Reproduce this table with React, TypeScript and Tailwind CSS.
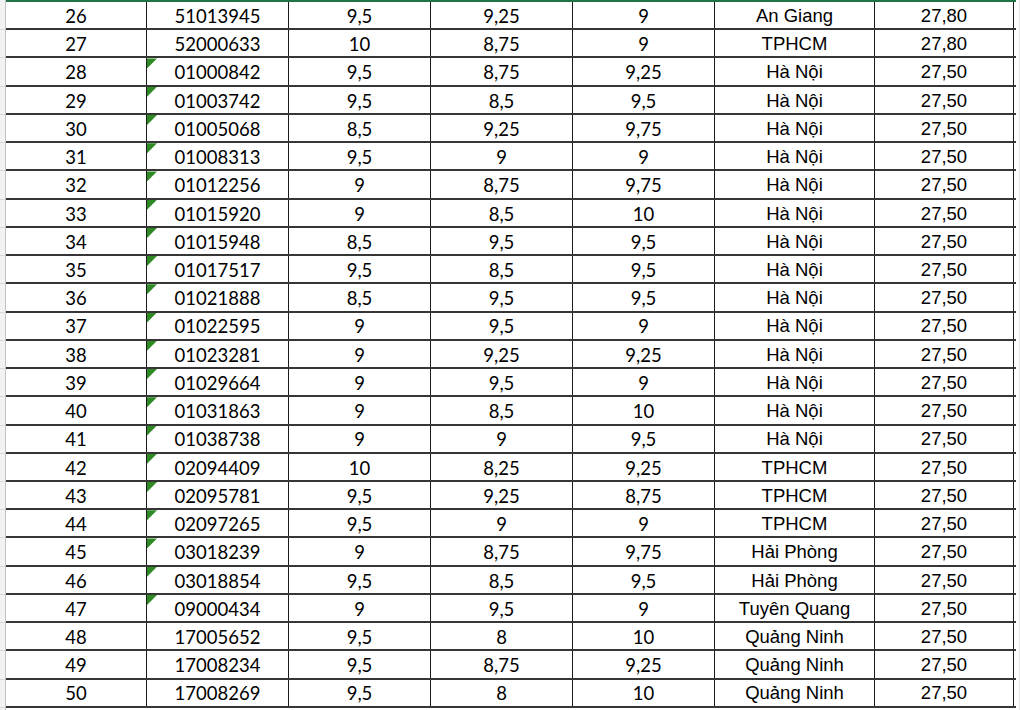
import React from 'react'

type Row = [string, string, string, string, string, string, string]

const rows: Row[] = [
  ['26', '51013945', '9,5', '9,25', '9', 'An Giang', '27,80'],
  ['27', '52000633', '10', '8,75', '9', 'TPHCM', '27,80'],
  ['28', '01000842', '9,5', '8,75', '9,25', 'Hà Nội', '27,50'],
  ['29', '01003742', '9,5', '8,5', '9,5', 'Hà Nội', '27,50'],
  ['30', '01005068', '8,5', '9,25', '9,75', 'Hà Nội', '27,50'],
  ['31', '01008313', '9,5', '9', '9', 'Hà Nội', '27,50'],
  ['32', '01012256', '9', '8,75', '9,75', 'Hà Nội', '27,50'],
  ['33', '01015920', '9', '8,5', '10', 'Hà Nội', '27,50'],
  ['34', '01015948', '8,5', '9,5', '9,5', 'Hà Nội', '27,50'],
  ['35', '01017517', '9,5', '8,5', '9,5', 'Hà Nội', '27,50'],
  ['36', '01021888', '8,5', '9,5', '9,5', 'Hà Nội', '27,50'],
  ['37', '01022595', '9', '9,5', '9', 'Hà Nội', '27,50'],
  ['38', '01023281', '9', '9,25', '9,25', 'Hà Nội', '27,50'],
  ['39', '01029664', '9', '9,5', '9', 'Hà Nội', '27,50'],
  ['40', '01031863', '9', '8,5', '10', 'Hà Nội', '27,50'],
  ['41', '01038738', '9', '9', '9,5', 'Hà Nội', '27,50'],
  ['42', '02094409', '10', '8,25', '9,25', 'TPHCM', '27,50'],
  ['43', '02095781', '9,5', '9,25', '8,75', 'TPHCM', '27,50'],
  ['44', '02097265', '9,5', '9', '9', 'TPHCM', '27,50'],
  ['45', '03018239', '9', '8,75', '9,75', 'Hải Phòng', '27,50'],
  ['46', '03018854', '9,5', '8,5', '9,5', 'Hải Phòng', '27,50'],
  ['47', '09000434', '9', '9,5', '9', 'Tuyên Quang', '27,50'],
  ['48', '17005652', '9,5', '8', '10', 'Quảng Ninh', '27,50'],
  ['49', '17008234', '9,5', '8,75', '9,25', 'Quảng Ninh', '27,50'],
  ['50', '17008269', '9,5', '8', '10', 'Quảng Ninh', '27,50'],
]

// numbers stored as text get Excel's little green flag
const flagged = (id: string) => id.startsWith('0')

function Cell({ children, arialFont, flag }: { children: string; arialFont?: boolean; flag?: boolean }) {
  return (
    <div
      className={
        arialFont
          ? "relative flex items-center justify-center border-r border-[#1a1a1a] [font-family:'Liberation_Sans',Arial,sans-serif] text-[18.5px] leading-none text-black"
          : "relative flex items-center justify-center border-r border-[#1a1a1a] [font-family:Lato,'Open_Sans',sans-serif] text-[18.5px] leading-none text-black"
      }
    >
      {flag && (
        <div className="absolute left-0 top-0 h-[10px] w-[10px] bg-[#2f8a26] [clip-path:polygon(0_0,100%_0,0_100%)]" />
      )}
      <span className="pt-[2px]">{children}</span>
    </div>
  )
}

export default function App() {
  return (
    <div className="flex h-[710px] w-[1020px] overflow-hidden bg-white">
      {/* row header gutter */}
      <div className="flex w-[6px] flex-col border-r border-[#c4c4c4] bg-[#f2f2f2]">
        <div className="h-[2px]" />
        {rows.map((r) => (
          <div key={r[0]} className="h-[28.24px] border-b border-[#d9d9d9]" />
        ))}
      </div>

      <div className="flex flex-col">
        <div className="h-[2px] w-[1010px] bg-[#217346]" />
        {rows.map((r) => (
          <div
            key={r[0]}
            className="grid h-[28.24px] grid-cols-[141px_142px_142px_142px_142px_160px_139px] border-b-2 border-[#363636]"
          >
            <Cell>{r[0]}</Cell>
            <Cell flag={flagged(r[1])}>{r[1]}</Cell>
            <Cell>{r[2]}</Cell>
            <Cell>{r[3]}</Cell>
            <Cell>{r[4]}</Cell>
            <Cell arialFont>{r[5]}</Cell>
            <Cell arialFont>{r[6]}</Cell>
          </div>
        ))}
      </div>

      <div className="flex-1 border-r border-[#e3e3e3]" />
    </div>
  )
}
